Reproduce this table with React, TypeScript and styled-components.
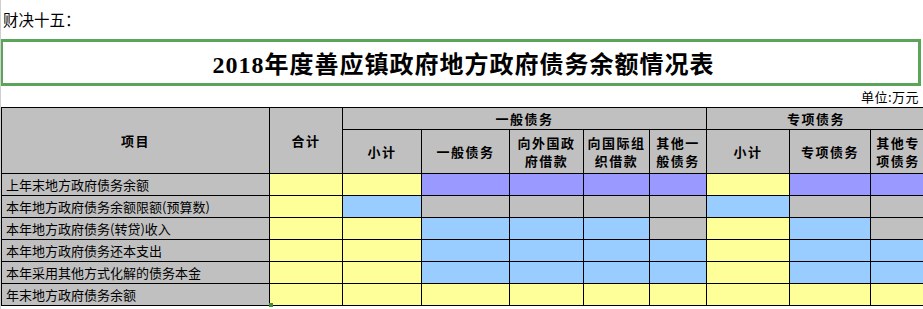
import React from 'react'
import styled, { createGlobalStyle } from 'styled-components'

// cell fill colours, as the sheet uses them
const fills: Record<string, string> = {
	Y: '#ffff99',
	B: '#99ccff',
	P: '#9999ff',
	G: '#c0c0c0',
}

const rows: { label: string; cells: string }[] = [
	{ label: '上年末地方政府债务余额', cells: 'YYPPPPYPP' },
	{ label: '本年地方政府债务余额限额(预算数)', cells: 'YBGGGGBGG' },
	{ label: '本年地方政府债务(转贷)收入', cells: 'YYBBBGYBG' },
	{ label: '本年地方政府债务还本支出', cells: 'YYBBBBYBB' },
	{ label: '本年采用其他方式化解的债务本金', cells: 'YYBBBBYBB' },
	{ label: '年末地方政府债务余额', cells: 'YYYYYYYYY' },
]

const colWidths = [268, 73, 79, 88, 74, 66, 57, 83, 81, 55]

const GlobalStyle = createGlobalStyle`
	body {
		margin: 0;
		background: #ffffff;
		font-family: "Noto Sans CJK SC", "Liberation Sans", sans-serif;
		color: #000;
	}
`

const Page = styled.div`
	width: 923px;
	height: 309px;
	overflow: hidden;
	position: relative;
	border-left: 1px solid #d0d0d0;
	box-sizing: border-box;
`

const Caption = styled.div`
	height: 39px;
	padding: 9px 0 0 2px;
	box-sizing: border-box;
	font-size: 15.5px;
	line-height: 20px;
`

const TitleBox = styled.div`
	width: 921px;
	height: 47px;
	margin-left: -1px;
	box-sizing: border-box;
	border: 3px solid #5aa55a;
	display: flex;
	align-items: center;
	justify-content: center;
	font-family: "Liberation Serif", "Noto Sans CJK SC", serif;
	font-weight: bold;
	font-size: 24px;
	letter-spacing: 1px;
	padding-left: 6px;
`

const Unit = styled.div`
	height: 21px;
	display: flex;
	align-items: center;
	justify-content: flex-end;
	padding-right: 4px;
	font-size: 13px;
	letter-spacing: 0.5px;
`

const Sheet = styled.table`
	border-collapse: collapse;
	table-layout: fixed;
	width: ${colWidths.reduce((a, b) => a + b, 0)}px;
`

const HeadCell = styled.th<{ $h: number }>`
	background: #c0c0c0;
	border: 1px solid #000;
	height: ${(p) => p.$h}px;
	padding: 0;
	font-size: 13px;
	font-weight: bold;
	letter-spacing: 1.5px;
	line-height: 18px;
	text-align: center;
	vertical-align: middle;
`

const LabelCell = styled.td`
	background: #c0c0c0;
	border: 1px solid #000;
	height: 21px;
	padding: 0 0 0 4px;
	font-size: 13px;
	white-space: nowrap;
	overflow: hidden;
	line-height: 20px;
`

const DataCell = styled.td<{ $fill: string }>`
	background: ${(p) => p.$fill};
	border: 1px solid #000;
	height: 21px;
	padding: 0;
`

const Handle = styled.div`
	position: absolute;
	left: 268px;
	top: 303px;
	width: 4px;
	height: 4px;
	background: #3c8c3c;
`

const App: React.FC = () => {
	return (
		<Page>
			<GlobalStyle />
			<Caption>财决十五：</Caption>
			<TitleBox>2018年度善应镇政府地方政府债务余额情况表</TitleBox>
			<Unit>单位:万元</Unit>
			<Sheet>
				<colgroup>
					{colWidths.map((w, i) => (
						<col key={i} style={{ width: w }} />
					))}
				</colgroup>
				<thead>
					<tr>
						<HeadCell $h={21} rowSpan={2}>项目</HeadCell>
						<HeadCell $h={21} rowSpan={2}>合计</HeadCell>
						<HeadCell $h={21} colSpan={5}>一般债务</HeadCell>
						<HeadCell $h={21} colSpan={3}>专项债务</HeadCell>
					</tr>
					<tr>
						<HeadCell $h={43}>小计</HeadCell>
						<HeadCell $h={43}>一般债务</HeadCell>
						<HeadCell $h={43}>
							向外国政
							<br />
							府借款
						</HeadCell>
						<HeadCell $h={43}>
							向国际组
							<br />
							织借款
						</HeadCell>
						<HeadCell $h={43}>
							其他一
							<br />
							般债务
						</HeadCell>
						<HeadCell $h={43}>小计</HeadCell>
						<HeadCell $h={43}>专项债务</HeadCell>
						<HeadCell $h={43}>
							其他专
							<br />
							项债务
						</HeadCell>
					</tr>
				</thead>
				<tbody>
					{rows.map((row, i) => (
						<tr key={i}>
							<LabelCell>{row.label}</LabelCell>
							{row.cells.split('').map((c, j) => (
								<DataCell key={j} $fill={fills[c]} />
							))}
						</tr>
					))}
				</tbody>
			</Sheet>
			<Handle />
		</Page>
	)
}

export default App
